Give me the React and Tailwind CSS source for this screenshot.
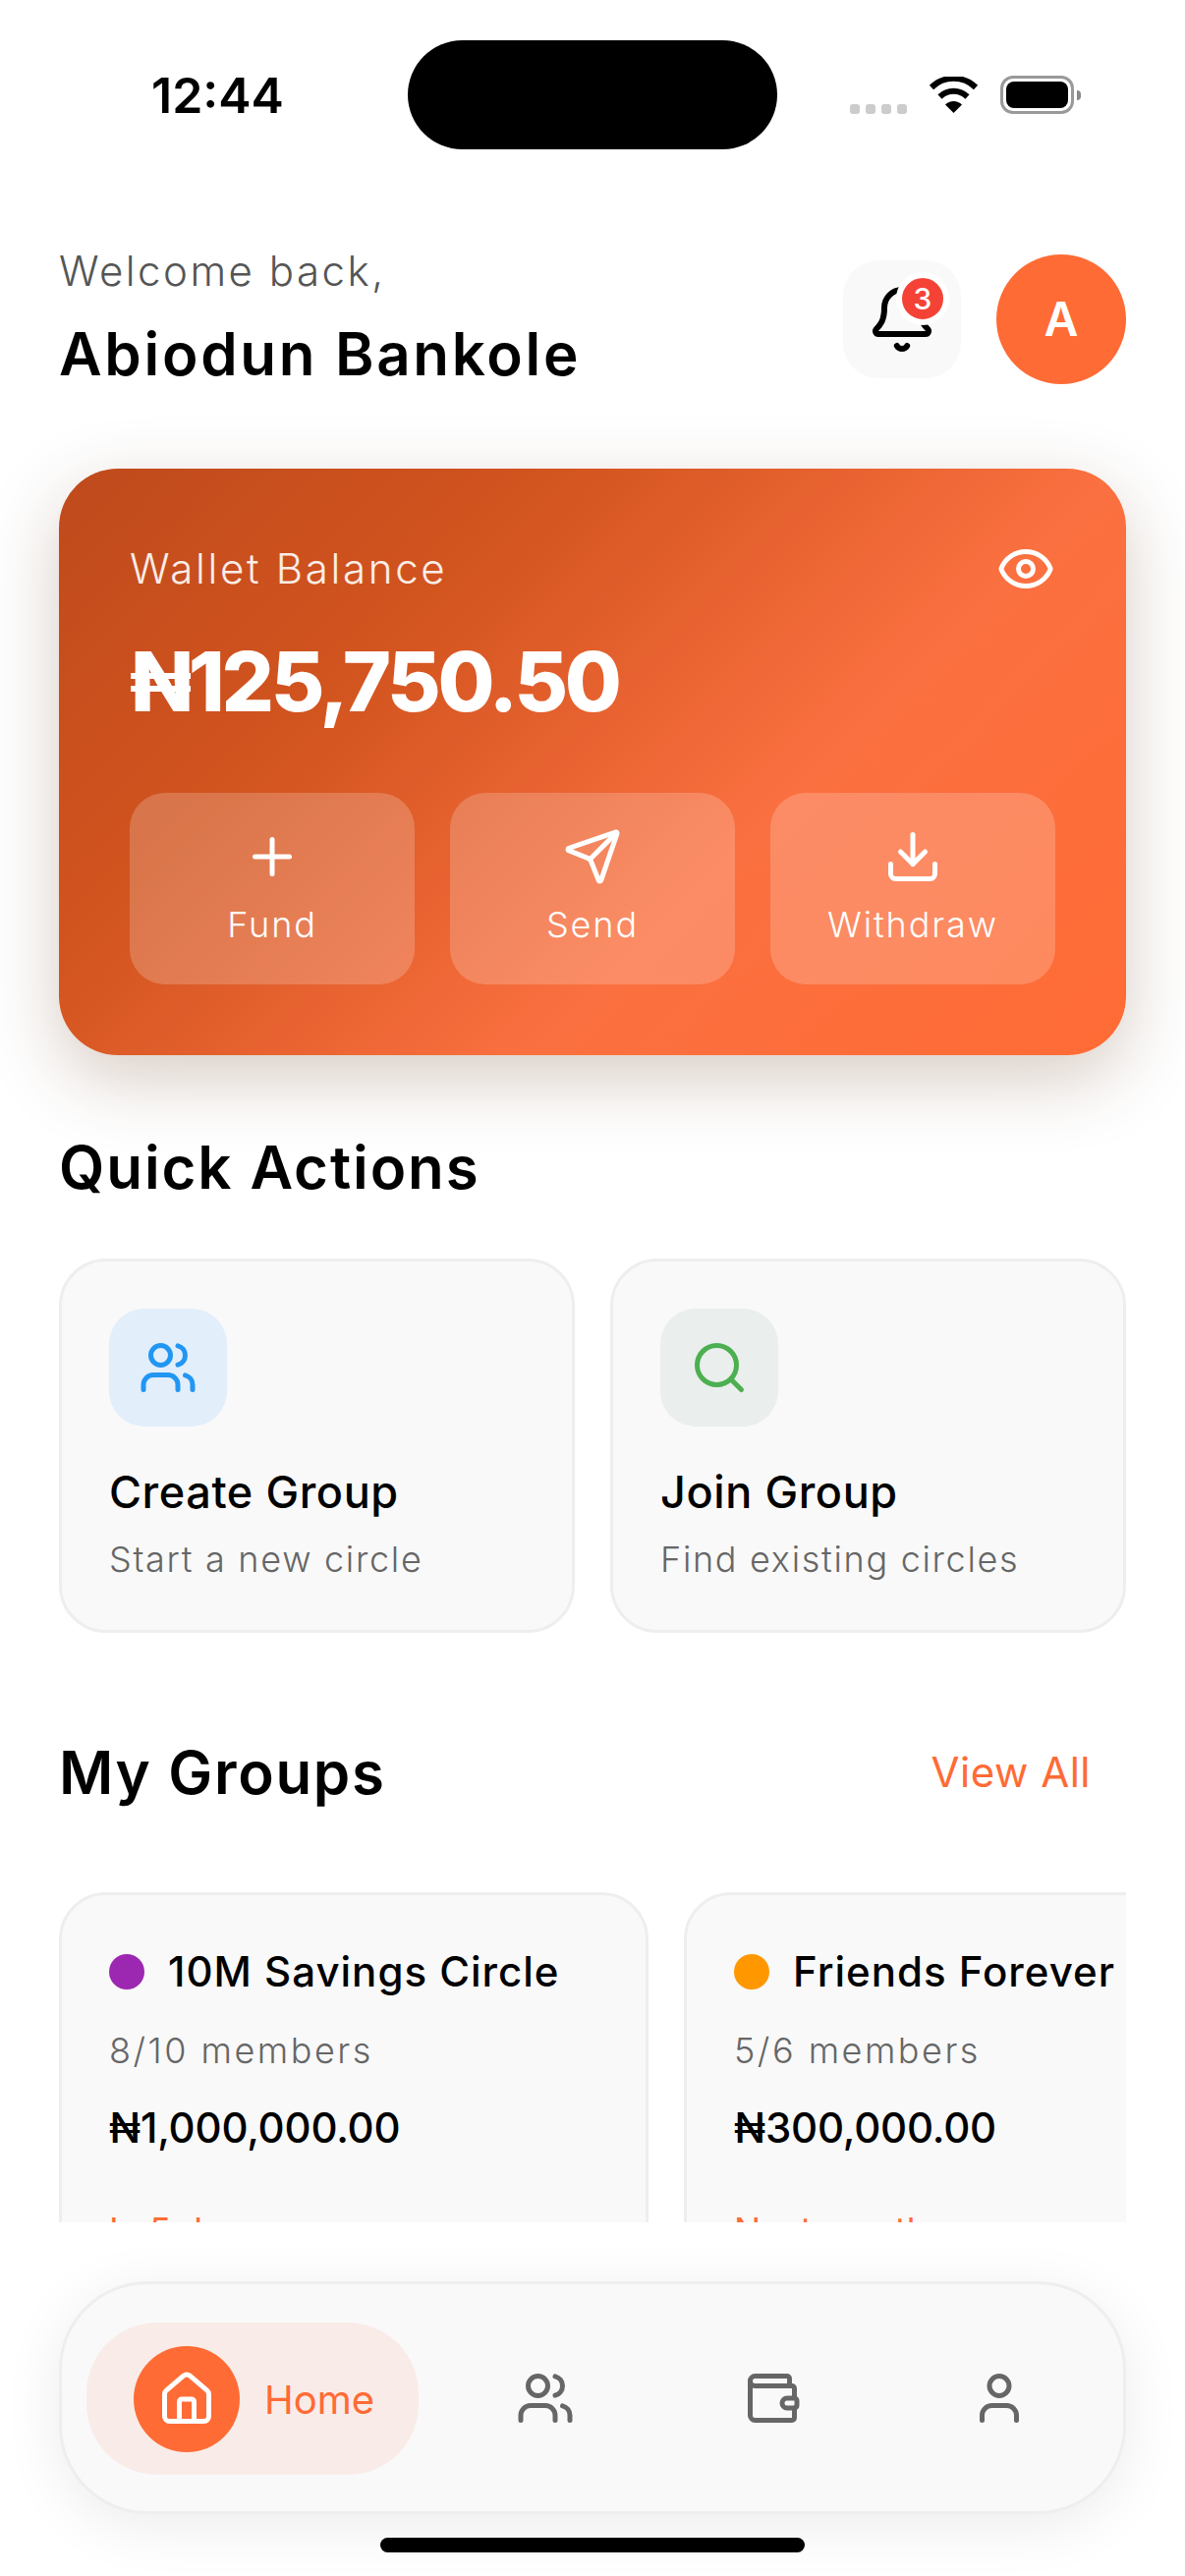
import { Bell, Download, Eye, Home, Plus, Search, Send, User, Users, Wallet } from 'lucide-react';

function StatusBar() {
  return (
    <div className="flex items-center pt-[41px]">
      <div className="w-[415px] pl-[154px] text-[50px] leading-[56px] font-semibold text-black">12:44</div>
      <div className="h-[111px] w-[376px] rounded-full bg-black" />
      <div className="flex items-center pl-[74px]">
        <div className="mt-[29px] flex gap-[6px]">
          <div className="h-[10px] w-[10px] rounded-[3px] bg-[#cccccc]" />
          <div className="h-[10px] w-[10px] rounded-[3px] bg-[#cccccc]" />
          <div className="h-[10px] w-[10px] rounded-[3px] bg-[#cccccc]" />
          <div className="h-[10px] w-[10px] rounded-[3px] bg-[#cccccc]" />
        </div>
        <svg className="ml-[22px]" width="51" height="37" viewBox="0 0 51 37">
          <path d="M3 11A32 32 0 0 1 48 11" fill="none" stroke="#000" strokeWidth="6" />
          <path d="M11.5 20.5A20 20 0 0 1 39.5 20.5" fill="none" stroke="#000" strokeWidth="6" />
          <path d="M25.5 37L17 28.5A12 12 0 0 1 34 28.5Z" fill="#000" />
        </svg>
        <div className="ml-[22px] flex items-center gap-[3px]">
          <div className="h-[39px] w-[75px] rounded-[13px] border-[3px] border-[#999999] p-[3px]">
            <div className="h-full w-full rounded-[8px] bg-black" />
          </div>
          <div className="h-[10px] w-[4px] rounded-r-full bg-[#888888]" />
        </div>
      </div>
    </div>
  );
}

function Header() {
  return (
    <div className="mx-[60px] mt-[107px] flex h-[132px] items-center justify-between">
      <div className="-mt-[10px] self-start">
        <div className="text-[42px] leading-[54px] font-light tracking-[2.5px] text-[#555555]">Welcome back,</div>
        <div className="mt-[21px] text-[60px] leading-[72px] font-semibold tracking-[2.7px] text-black">Abiodun Bankole</div>
      </div>
      <div className="flex items-center gap-[36px]">
        <div className="relative flex h-[120px] w-[120px] items-center justify-center rounded-[36px] bg-[#f9f9f9]">
          <Bell size={72} strokeWidth={2} className="text-black" />
          <div className="absolute top-[12px] left-[54px] flex h-[54px] w-[54px] items-center justify-center rounded-full border-[6px] border-white bg-[#f44336] text-[30px] font-medium text-white">3</div>
        </div>
        <div className="flex h-[132px] w-[132px] items-center justify-center rounded-full bg-[#ff6b35] text-[48px] font-semibold text-white">A</div>
      </div>
    </div>
  );
}

function WalletAction({ icon: Icon, label }) {
  return (
    <div className="flex h-[195px] flex-1 flex-col items-center rounded-[36px] bg-white/20 pt-[35px]">
      <Icon size={60} strokeWidth={2} className="text-white" />
      <div className="mt-[15px] text-[36px] leading-[48px] font-light tracking-[1.9px] text-white">{label}</div>
    </div>
  );
}

function WalletCard() {
  return (
    <div className="mx-[60px] mt-[86px] h-[597px] rounded-[60px] bg-[linear-gradient(135deg,#bf4a1c_0%,#d2541f_30%,#fb7040_64%,#ff6b35_100%)] p-[72px] shadow-[0_24px_72px_rgba(100,50,20,0.25)]">
      <div className="flex h-[60px] items-center justify-between">
        <div className="text-[42px] leading-[60px] font-light tracking-[2.7px] text-white/90">Wallet Balance</div>
        <Eye size={60} strokeWidth={2} className="text-white" />
      </div>
      <div className="mt-[25px] text-[84px] leading-[120px] font-extrabold tracking-[-3.4px] text-white">₦125,750.50</div>
      <div className="mt-[53px] flex gap-[36px]">
        <WalletAction icon={Plus} label="Fund" />
        <WalletAction icon={Send} label="Send" />
        <WalletAction icon={Download} label="Withdraw" />
      </div>
    </div>
  );
}

function QuickCard({ icon: Icon, iconBg, iconColor, title, sub }) {
  return (
    <div className="h-[381px] flex-1 rounded-[48px] border-[3px] border-[#eeeeee] bg-[#f9f9f9] p-[48px]">
      <div className={`flex h-[120px] w-[120px] items-center justify-center rounded-[36px] ${iconBg}`}>
        <Icon size={60} strokeWidth={2} className={iconColor} />
      </div>
      <div className="mt-[37px] text-[45px] leading-[60px] font-medium tracking-[0.6px] text-black">{title}</div>
      <div className="mt-[14px] text-[36px] leading-[48px] font-light tracking-[1.7px] text-[#666666]">{sub}</div>
    </div>
  );
}

function GroupCard({ dot, name, members, amount, due }) {
  return (
    <div className="h-[420px] w-[600px] shrink-0 rounded-[48px] border-[3px] border-[#eeeeee] bg-[#f9f9f9] p-[48px]">
      <div className="flex h-[60px] items-center gap-[24px]">
        <div className={`h-[36px] w-[36px] shrink-0 rounded-full ${dot}`} />
        <div className="text-[42px] leading-[60px] font-medium tracking-[1px] whitespace-nowrap text-black">{name}</div>
      </div>
      <div className="mt-[26px] text-[36px] leading-[48px] font-light tracking-[2.5px] text-[#666666]">{members}</div>
      <div className="mt-[25px] text-[42px] leading-[60px] font-medium tracking-[-0.2px] text-black">{amount}</div>
      <div className="mt-[50px] text-[36px] leading-[48px] text-[#ff6b35]">{due}</div>
    </div>
  );
}

function BottomNav() {
  return (
    <div className="mx-[60px] mt-[60px] flex h-[237px] items-center rounded-[90px] border-[3px] border-[#eeeeee] bg-[#f9f9f9] pl-[25px] shadow-[0_12px_60px_rgba(0,0,0,0.08)]">
      <div className="mt-[2px] flex h-[155px] w-[338px] items-center gap-[25px] rounded-[72px] bg-[#f9ece8] pl-[48px]">
        <div className="flex h-[108px] w-[108px] items-center justify-center rounded-full bg-[#ff6b35]">
          <Home size={60} strokeWidth={2} className="text-white" />
        </div>
        <div className="mt-[3px] text-[40px] leading-[52px] text-[#ff6b35]">Home</div>
      </div>
      <div className="flex flex-1 pl-[13px] pr-[11px] text-[#666666]">
        <div className="flex flex-1 justify-center"><Users size={60} strokeWidth={2} /></div>
        <div className="flex flex-1 justify-center"><Wallet size={60} strokeWidth={2} /></div>
        <div className="flex flex-1 justify-center"><User size={60} strokeWidth={2} /></div>
      </div>
    </div>
  );
}

export default function App() {
  return (
    <div className="h-[2622px] w-[1206px] overflow-hidden bg-white font-['Inter',sans-serif]">
      <StatusBar />
      <Header />
      <WalletCard />

      <div className="mx-[60px] mt-[72px] text-[60px] leading-[84px] font-semibold tracking-[1.9px] text-black">Quick Actions</div>
      <div className="mx-[60px] mt-[51px] flex gap-[36px]">
        <QuickCard icon={Users} iconBg="bg-[#e3eefb]" iconColor="text-[#2196f3]" title="Create Group" sub="Start a new circle" />
        <QuickCard icon={Search} iconBg="bg-[#eaeeec]" iconColor="text-[#4caf50]" title="Join Group" sub="Find existing circles" />
      </div>

      <div className="mx-[60px] mt-[100px] flex items-center justify-between pr-[36px]">
        <div className="text-[60px] leading-[84px] font-semibold tracking-[1.7px] text-black">My Groups</div>
        <div className="text-[42px] leading-[54px] tracking-[0.5px] text-[#ff6b35]">View All</div>
      </div>
      <div className="mx-[60px] mt-[80px] flex h-[336px] items-start gap-[36px] overflow-hidden">
        <GroupCard dot="bg-[#9c27b0]" name="10M Savings Circle" members="8/10 members" amount="₦1,000,000.00" due="In 5 days" />
        <GroupCard dot="bg-[#ff9800]" name="Friends Forever" members="5/6 members" amount="₦300,000.00" due="Next month" />
      </div>

      <BottomNav />
      <div className="mx-auto mt-[24px] h-[15px] w-[432px] rounded-full bg-black" />
    </div>
  );
}
